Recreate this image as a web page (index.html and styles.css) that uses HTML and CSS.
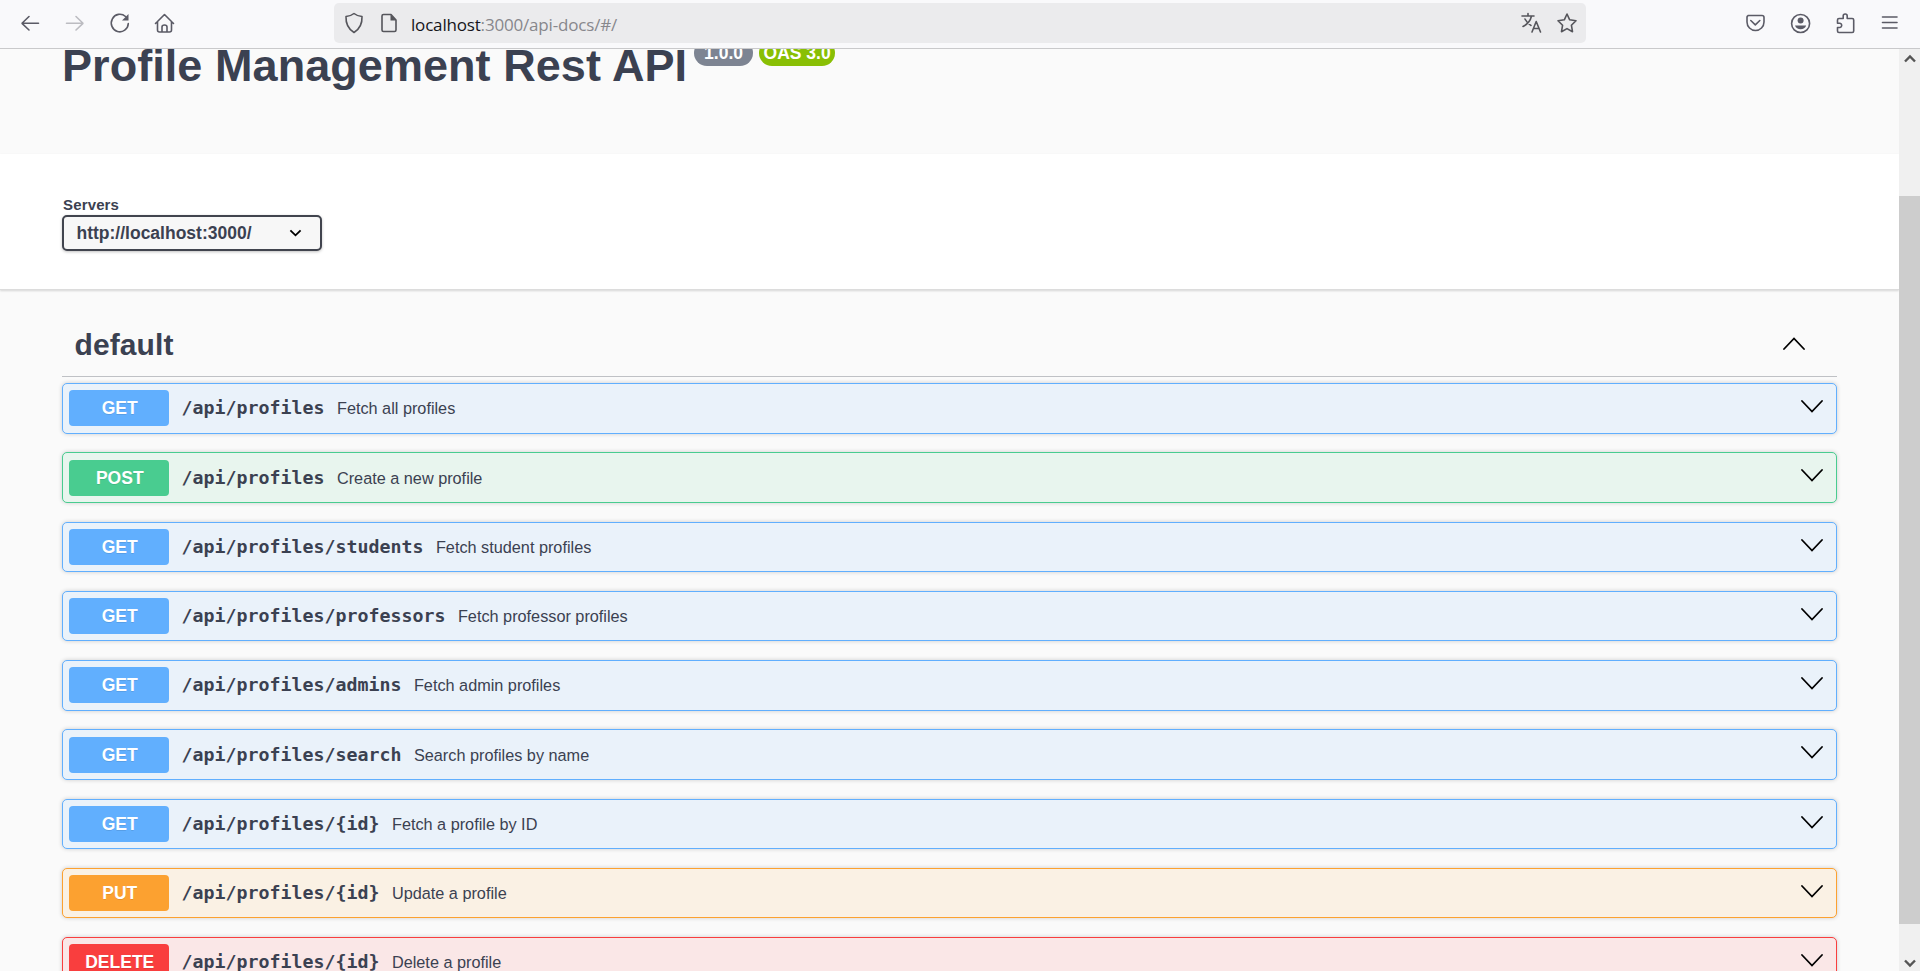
FILE: index.html
```html
<!DOCTYPE html>
<html lang="en">
<head>
<meta charset="utf-8">
<title>Profile Management Rest API</title>
<link rel="stylesheet" href="styles.css">
</head>
<body>
<div class="browser">
  <header class="toolbar">
    <nav class="nav">
      <svg class="ico" viewBox="0 0 24 24"><path d="M20.500 12.300H4M11 5.500 4 12.300l7 6.700"/></svg>
      <svg class="ico dim" viewBox="0 0 24 24"><path d="M3.500 12.300H20M13 5.500l7 6.800-7 6.700"/></svg>
      <svg class="ico" viewBox="0 0 24 24"><path d="M20.300 12.500A8.500 8.800 0 1 1 17.500 5.500"/><path class="fill" d="M20.500 3v6.500H14z"/></svg>
      <svg class="ico" viewBox="0 0 24 24"><path d="M2.500 12.500 11.500 3.500l9 9M4.500 10.500V19q0 2 2 2h10q2 0 2-2v-8.500M9 21v-5q0-2 2.500-2t2.500 2v5"/></svg>
    </nav>
    <div class="urlbar">
      <svg class="ico" viewBox="0 0 24 24"><path d="M12 2.500c2.500 2 5 2.700 8 3 .3 6-1.500 12-8 16-6.500-4-8.300-10-8-16 3-.3 5.500-1 8-3z"/></svg>
      <svg class="ico" viewBox="0 0 24 24"><path d="M6.500 3.500H14l5 5.500v10q0 1.500-1.500 1.500h-11Q5 20.500 5 19V5q0-1.500 1.500-1.500z"/><path class="fill" d="M13.500 3.500V9.500H19z"/></svg>
      <span class="url"><span class="host">localhost</span>:3000/api-docs/#/</span>
      <svg class="ico tr" viewBox="0 0 24 24"><path d="M2 5h12M8 2.500V5M11.500 5C10.500 9.500 7 13.500 3 15.500M5 8c1.500 3 4 5.500 6 6.500M12 21 16.200 10.500l4.300 10.500M13.500 17.500h5.500"/></svg>
      <svg class="ico" viewBox="0 0 24 24"><path d="m12 3 2.700 5.800 6.300.9-4.600 4.500 1.100 6.500L12 17.600l-5.500 3.100 1.100-6.500L3 9.700l6.300-.9z"/></svg>
    </div>
    <div class="tools">
      <svg class="ico" viewBox="0 0 24 24"><path d="M5 4.500h14q2 0 2 2V11a8.500 8.500 0 0 1-17 0V6.500q0-2 2-2zM7.800 9.500l4.500 4.300 4.500-4.300"/></svg>
      <svg class="ico" viewBox="0 0 24 24"><circle cx="12.600" cy="12.500" r="9"/><circle class="fill" cx="12.600" cy="9.500" r="3"/><path class="fill" d="M7 14.500h11.200q-1.500 3.800-5.600 3.800T7 14.500z"/></svg>
      <svg class="ico" viewBox="0 0 24 24"><path d="M4.500 9q0-1.500 1.500-1.500h4.200V5a2 2 0 0 1 4 0v2.500h5q1.500 0 1.500 1.500v11q0 1.500-1.500 1.500H6q-1.500 0-1.500-1.500v-3.500H7a2.200 2.200 0 0 0 0-4.300H4.500z"/></svg>
      <svg class="ico" viewBox="0 0 24 24"><path d="M4.500 6h14.500M4.500 11.500h14.500M4.500 17h14.500"/></svg>
    </div>
  </header>
  <div class="viewport">
    <main class="page">
      <section class="info">
        <h1 class="title">Profile Management Rest API</h1>
        <span class="badge">1.0.0</span><span class="badge oas">OAS 3.0</span>
      </section>
      <section class="servers">
        <span class="label">Servers</span>
        <div class="select"><span>http://localhost:3000/</span><svg class="caret" viewBox="0 0 14 8"><path d="M1.500 1.200 7 6.500l5.500-5.300"/></svg></div>
      </section>
      <section class="ops">
        <div class="tag"><h2 class="tagname">default</h2><svg class="chev" viewBox="0 0 22 13"><path d="M1 12 11 1.500 21 12"/></svg></div>
        <div class="op get"><span class="method">GET</span><span class="path">/api/profiles</span><span class="desc">Fetch all profiles</span><svg class="chev" viewBox="0 0 22 13"><path d="M1 1 11 11.500 21 1"/></svg></div>
        <div class="op post"><span class="method">POST</span><span class="path">/api/profiles</span><span class="desc">Create a new profile</span><svg class="chev" viewBox="0 0 22 13"><path d="M1 1 11 11.500 21 1"/></svg></div>
        <div class="op get"><span class="method">GET</span><span class="path">/api/profiles/students</span><span class="desc">Fetch student profiles</span><svg class="chev" viewBox="0 0 22 13"><path d="M1 1 11 11.500 21 1"/></svg></div>
        <div class="op get"><span class="method">GET</span><span class="path">/api/profiles/professors</span><span class="desc">Fetch professor profiles</span><svg class="chev" viewBox="0 0 22 13"><path d="M1 1 11 11.500 21 1"/></svg></div>
        <div class="op get"><span class="method">GET</span><span class="path">/api/profiles/admins</span><span class="desc">Fetch admin profiles</span><svg class="chev" viewBox="0 0 22 13"><path d="M1 1 11 11.500 21 1"/></svg></div>
        <div class="op get"><span class="method">GET</span><span class="path">/api/profiles/search</span><span class="desc">Search profiles by name</span><svg class="chev" viewBox="0 0 22 13"><path d="M1 1 11 11.500 21 1"/></svg></div>
        <div class="op get"><span class="method">GET</span><span class="path">/api/profiles/{id}</span><span class="desc">Fetch a profile by ID</span><svg class="chev" viewBox="0 0 22 13"><path d="M1 1 11 11.500 21 1"/></svg></div>
        <div class="op put"><span class="method">PUT</span><span class="path">/api/profiles/{id}</span><span class="desc">Update a profile</span><svg class="chev" viewBox="0 0 22 13"><path d="M1 1 11 11.500 21 1"/></svg></div>
        <div class="op delete"><span class="method">DELETE</span><span class="path">/api/profiles/{id}</span><span class="desc">Delete a profile</span><svg class="chev" viewBox="0 0 22 13"><path d="M1 1 11 11.500 21 1"/></svg></div>
      </section>
    </main>
    <aside class="scrollbar">
      <svg class="arrow" viewBox="0 0 12 9"><path d="M1 7.500 6 2.500l5 5"/></svg>
      <div class="thumb"></div>
      <svg class="arrow" viewBox="0 0 12 9"><path d="M1 1.500l5 5 5-5"/></svg>
    </aside>
  </div>
</div>
</body>
</html>
```
FILE: styles.css
```css
* { box-sizing: border-box; }
body { margin: 0; font-family: "Liberation Sans", Arial, sans-serif; color: #3b4151; }
svg { display: block; flex: none; fill: none; stroke: currentColor; }
.browser { display: flex; flex-direction: column; height: 971px; overflow: hidden; }

.toolbar { display: flex; align-items: flex-start; flex: none; height: 49px; background: #f9f9fb; border-bottom: 1px solid #c9c9cb; color: #5b5b66; }
.ico { width: 24px; height: 24px; stroke-width: 1.6; stroke-linecap: round; stroke-linejoin: round; }
.fill { fill: currentColor; stroke: none; }
.dim { color: #bcbcc1; }
.nav { display: flex; gap: 21px; width: 334px; padding: 11px 0 0 18px; }
.urlbar { display: flex; align-items: center; width: 1252px; height: 40px; margin-top: 3px; padding: 0 7px 0 8px; border-radius: 5px; background: #ebebed; color: #55555b; }
.urlbar .ico + .ico { margin-left: 11px; }
.url { flex: 1; margin-left: 10px; font: 17px/40px "Open Sans", "Noto Sans", sans-serif; letter-spacing: -0.18px; color: #87878c; padding-top: 3px; }
.host { color: #15141a; }
.tools { display: flex; gap: 21px; margin-left: 157px; padding-top: 11px; }

.viewport { display: flex; flex: 1; min-height: 0; overflow: hidden; }
.page { flex: 1; height: 922px; overflow: hidden; background: #fafafa; }
.info { display: flex; align-items: flex-start; height: 105px; padding-left: 62px; }
.title { margin: -9px 0 0; font-size: 45px; line-height: 52px; font-weight: 700; letter-spacing: .06px; white-space: nowrap; }
.badge { height: 26px; margin: -9px 0 0 6px; padding: 0 10px; border-radius: 13px; background: #7d8492; color: #fff; font-size: 17.500px; line-height: 27px; font-weight: 700; }
.oas { padding: 0 4.5px; background: #89bf04; }
.title + .badge { margin-left: 7px; }

.servers { height: 136px; padding: 42px 0 0 62px; background: #fff; box-shadow: 0 1px 2px rgba(0,0,0,.15); border-bottom: 1px solid #dcdcdc; }
.label { display: block; height: 19px; padding-left: 1px; font-size: 15px; line-height: 18px; font-weight: 700; letter-spacing: .15px; }
.select { display: flex; align-items: center; justify-content: space-between; width: 260px; height: 36px; padding: 0 18px 0 12.500px; border: 2px solid #41444e; border-radius: 5px; background: #f7f7f7; box-shadow: 0 1px 3px rgba(0,0,0,.25); font-size: 17.500px; font-weight: 700; }
.caret { width: 13px; height: 8px; stroke: #000; stroke-width: 2; }

.ops { padding: 36px 62px 0; }
.tag { display: flex; align-items: center; justify-content: space-between; height: 51px; margin-bottom: 6px; padding: 0 32px 15px 12.500px; border-bottom: 1px solid #bfc1c5; }
.tagname { margin: 2px 0 0; font-size: 30px; line-height: 36px; letter-spacing: .1px; }
.chev { width: 22px; height: 13px; stroke: #000; stroke-width: 1.8; stroke-linecap: round; }
.op { display: flex; align-items: center; height: 50.5px; margin-bottom: 18.75px; padding: 0 13px 0 6px; border: 1px solid; border-radius: 5px; box-shadow: 0 0 4px rgba(0,0,0,.19); }
.op .chev { margin: -3.5px 0 0 auto; }
.method { width: 100px; height: 36px; padding-left: 1.5px; border-radius: 4px; color: #fff; font-size: 17.500px; line-height: 36px; font-weight: 700; text-align: center; text-shadow: 0 1px 0 rgba(0,0,0,.1); }
.path { margin-left: 12.500px; font: 700 18.270px/24px "DejaVu Sans Mono", monospace; }
.desc { margin-left: 12.500px; font-size: 16.250px; line-height: 20px; }
.get { border-color: #61affe; background: #eaf2fa; }
.get .method { background: #61affe; }
.post { border-color: #49cc90; background: #e8f5ee; }
.post .method { background: #49cc90; }
.put { border-color: #fca130; background: #faf1e4; }
.put .method { background: #fca130; }
.delete { border-color: #f93e3e; background: #fae7e7; }
.delete .method { background: #f93e3e; }

.scrollbar { display: flex; flex-direction: column; align-items: center; width: 21px; padding: 5px 0 3px; background: #f0f0f0; }
.arrow { width: 12px; height: 9px; stroke: #555; stroke-width: 2.4; }
.thumb { width: 21px; height: 728px; margin: 133px 0 auto; background: #cdcdcd; }
```
